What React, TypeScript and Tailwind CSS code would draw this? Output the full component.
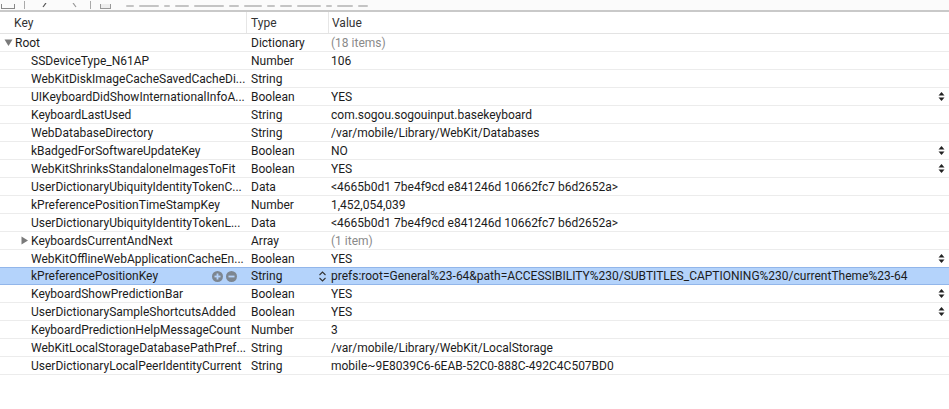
import React from "react";

type Row = {
  key: string;
  type: string;
  value: string;
  stepper?: boolean;
  gray?: boolean;
  tri?: boolean;
  selected?: boolean;
};

const DATA = "<4665b0d1 7be4f9cd e841246d 10662fc7 b6d2652a>";

const rows: Row[] = [
  { key: "SSDeviceType_N61AP", type: "Number", value: "106" },
  { key: "WebKitDiskImageCacheSavedCacheDi...", type: "String", value: "" },
  { key: "UIKeyboardDidShowInternationalInfoA...", type: "Boolean", value: "YES", stepper: true },
  { key: "KeyboardLastUsed", type: "String", value: "com.sogou.sogouinput.basekeyboard" },
  { key: "WebDatabaseDirectory", type: "String", value: "/var/mobile/Library/WebKit/Databases" },
  { key: "kBadgedForSoftwareUpdateKey", type: "Boolean", value: "NO", stepper: true },
  { key: "WebKitShrinksStandaloneImagesToFit", type: "Boolean", value: "YES", stepper: true },
  { key: "UserDictionaryUbiquityIdentityTokenC...", type: "Data", value: DATA },
  { key: "kPreferencePositionTimeStampKey", type: "Number", value: "1,452,054,039" },
  { key: "UserDictionaryUbiquityIdentityTokenL...", type: "Data", value: DATA },
  { key: "KeyboardsCurrentAndNext", type: "Array", value: "(1 item)", gray: true, tri: true },
  { key: "WebKitOfflineWebApplicationCacheEn...", type: "Boolean", value: "YES", stepper: true },
  {
    key: "kPreferencePositionKey",
    type: "String",
    value: "prefs:root=General%23-64&path=ACCESSIBILITY%230/SUBTITLES_CAPTIONING%230/currentTheme%23-64",
    selected: true,
  },
  { key: "KeyboardShowPredictionBar", type: "Boolean", value: "YES", stepper: true },
  { key: "UserDictionarySampleShortcutsAdded", type: "Boolean", value: "YES", stepper: true },
  { key: "KeyboardPredictionHelpMessageCount", type: "Number", value: "3" },
  { key: "WebKitLocalStorageDatabasePathPref...", type: "String", value: "/var/mobile/Library/WebKit/LocalStorage" },
  { key: "UserDictionaryLocalPeerIdentityCurrent", type: "String", value: "mobile~9E8039C6-6EAB-52C0-888C-492C4C507BD0" },
];

function Stepper() {
  return (
    <svg width="7" height="11" viewBox="0 0 7 11" className="shrink-0">
      <path d="M3.5 1 L6.5 4.5 L0.5 4.5 Z" fill="#222" />
      <path d="M3.5 10 L6.5 6.5 L0.5 6.5 Z" fill="#222" />
    </svg>
  );
}

function Chevrons() {
  return (
    <svg width="9" height="13" viewBox="0 0 9 13" className="shrink-0">
      <path d="M1.5 5 L4.5 2 L7.5 5" stroke="#333" strokeWidth="1.1" fill="none" />
      <path d="M1.5 8 L4.5 11 L7.5 8" stroke="#333" strokeWidth="1.1" fill="none" />
    </svg>
  );
}

function Tri({ down, color = "#7a7a7a" }: { down?: boolean; color?: string }) {
  return down ? (
    <svg width="9" height="9" viewBox="0 0 9 9">
      <path d="M0.5 1.5 L8.5 1.5 L4.5 8 Z" fill={color} />
    </svg>
  ) : (
    <svg width="9" height="9" viewBox="0 0 9 9">
      <path d="M1.5 0.5 L8 4.5 L1.5 8.5 Z" fill={color} />
    </svg>
  );
}

function CircleBtn({ plus }: { plus?: boolean }) {
  return (
    <svg width="11" height="11" viewBox="0 0 11 11">
      <circle cx="5.5" cy="5.5" r="5.5" fill="#7d8690" />
      <rect x="2.5" y="4.6" width="6" height="1.8" fill="#b4d3fb" />
      {plus && <rect x="4.6" y="2.5" width="1.8" height="6" fill="#b4d3fb" />}
    </svg>
  );
}

const crumbs = [8, 20, 6, 14, 30, 10, 18, 8, 12, 24, 6, 16, 10];

export default function App() {
  return (
    <div
      className="w-[949px] h-[409px] bg-white overflow-hidden text-[12px] text-[#1c1c1c]"
      style={{ fontFamily: "Roboto, 'Liberation Sans', sans-serif" }}
    >
      {/* clipped toolbar strip */}
      <div className="h-[10px] overflow-hidden bg-[#fbfbfb] border-b-2 border-[#c9c9c9] box-content">
        <div className="flex items-end gap-[9px] h-[9px] pl-[1px]">
          <div className="w-[14px] h-[5px] border border-[#888] border-t-0" />
          <div className="w-px h-[8px] bg-[#aaa]" />
          <svg width="6" height="6" viewBox="0 0 6 6" className="ml-[8px]">
            <path d="M4 0 L1 4" stroke="#555" strokeWidth="1.2" />
          </svg>
          <svg width="6" height="6" viewBox="0 0 6 6" className="ml-[14px]">
            <path d="M2 0 L5 4" stroke="#999" strokeWidth="1.2" />
          </svg>
          <div className="w-px h-[8px] bg-[#aaa] ml-[4px]" />
          <div className="w-[11px] h-[5px] border border-[#999] border-t-0 bg-[#eee]" />
          <div className="flex items-end gap-[5px] ml-[6px] mb-[2px]">
            {crumbs.map((w, i) => (
              <div key={i} style={{ width: w }} className="h-[2px] bg-[#c4c4c4] rounded-sm" />
            ))}
          </div>
        </div>
      </div>

      {/* header */}
      <div className="flex h-[22px] items-center border-b border-[#e3e3e3] text-[#333]">
        <div className="w-[246px] pl-[14px] h-full flex items-center">Key</div>
        <div className="w-[82px] pl-[4px] h-full flex items-center border-l border-[#e6e6e6]">Type</div>
        <div className="flex-1 pl-[3px] h-full flex items-center border-l border-[#e6e6e6]">Value</div>
      </div>

      {/* Root row */}
      <div className="flex h-[18px] items-center border-b border-[#ececec]">
        <div className="w-[246px] flex items-center pl-[4px]">
          <Tri down />
          <span className="ml-[2px]">Root</span>
        </div>
        <div className="w-[82px] pl-[5px]">Dictionary</div>
        <div className="flex-1 pl-[3px] text-[#8a8a8a]">(18 items)</div>
      </div>

      {rows.map((r, i) => (
        <div
          key={i}
          className={
            r.selected
              ? "flex h-[18px] items-center bg-[#b4d3fb] border-y border-[#92b6ea] -mt-px"
              : "flex h-[18px] items-center border-b border-[#ececec]"
          }
        >
          <div className="w-[246px] flex items-center h-full">
            <div className="w-[31px] flex items-center justify-end pr-[2px]">
              {r.tri && <Tri />}
            </div>
            <span className="whitespace-nowrap flex-1 overflow-hidden">{r.key}</span>
            {r.selected && (
              <div className="flex items-center gap-[3px] mr-[9px]">
                <CircleBtn plus />
                <CircleBtn />
              </div>
            )}
          </div>
          <div className="w-[82px] pl-[5px] flex items-center h-full">
            <span className="flex-1">{r.type}</span>
            {r.selected && (
              <span className="mr-[1px]">
                <Chevrons />
              </span>
            )}
          </div>
          <div className="flex-1 pl-[3px] flex items-center h-full pr-[4px]">
            <span className={"flex-1 whitespace-nowrap overflow-hidden " + (r.gray ? "text-[#8a8a8a]" : "")}>
              {r.value}
            </span>
            {r.stepper && <Stepper />}
          </div>
        </div>
      ))}
    </div>
  );
}
